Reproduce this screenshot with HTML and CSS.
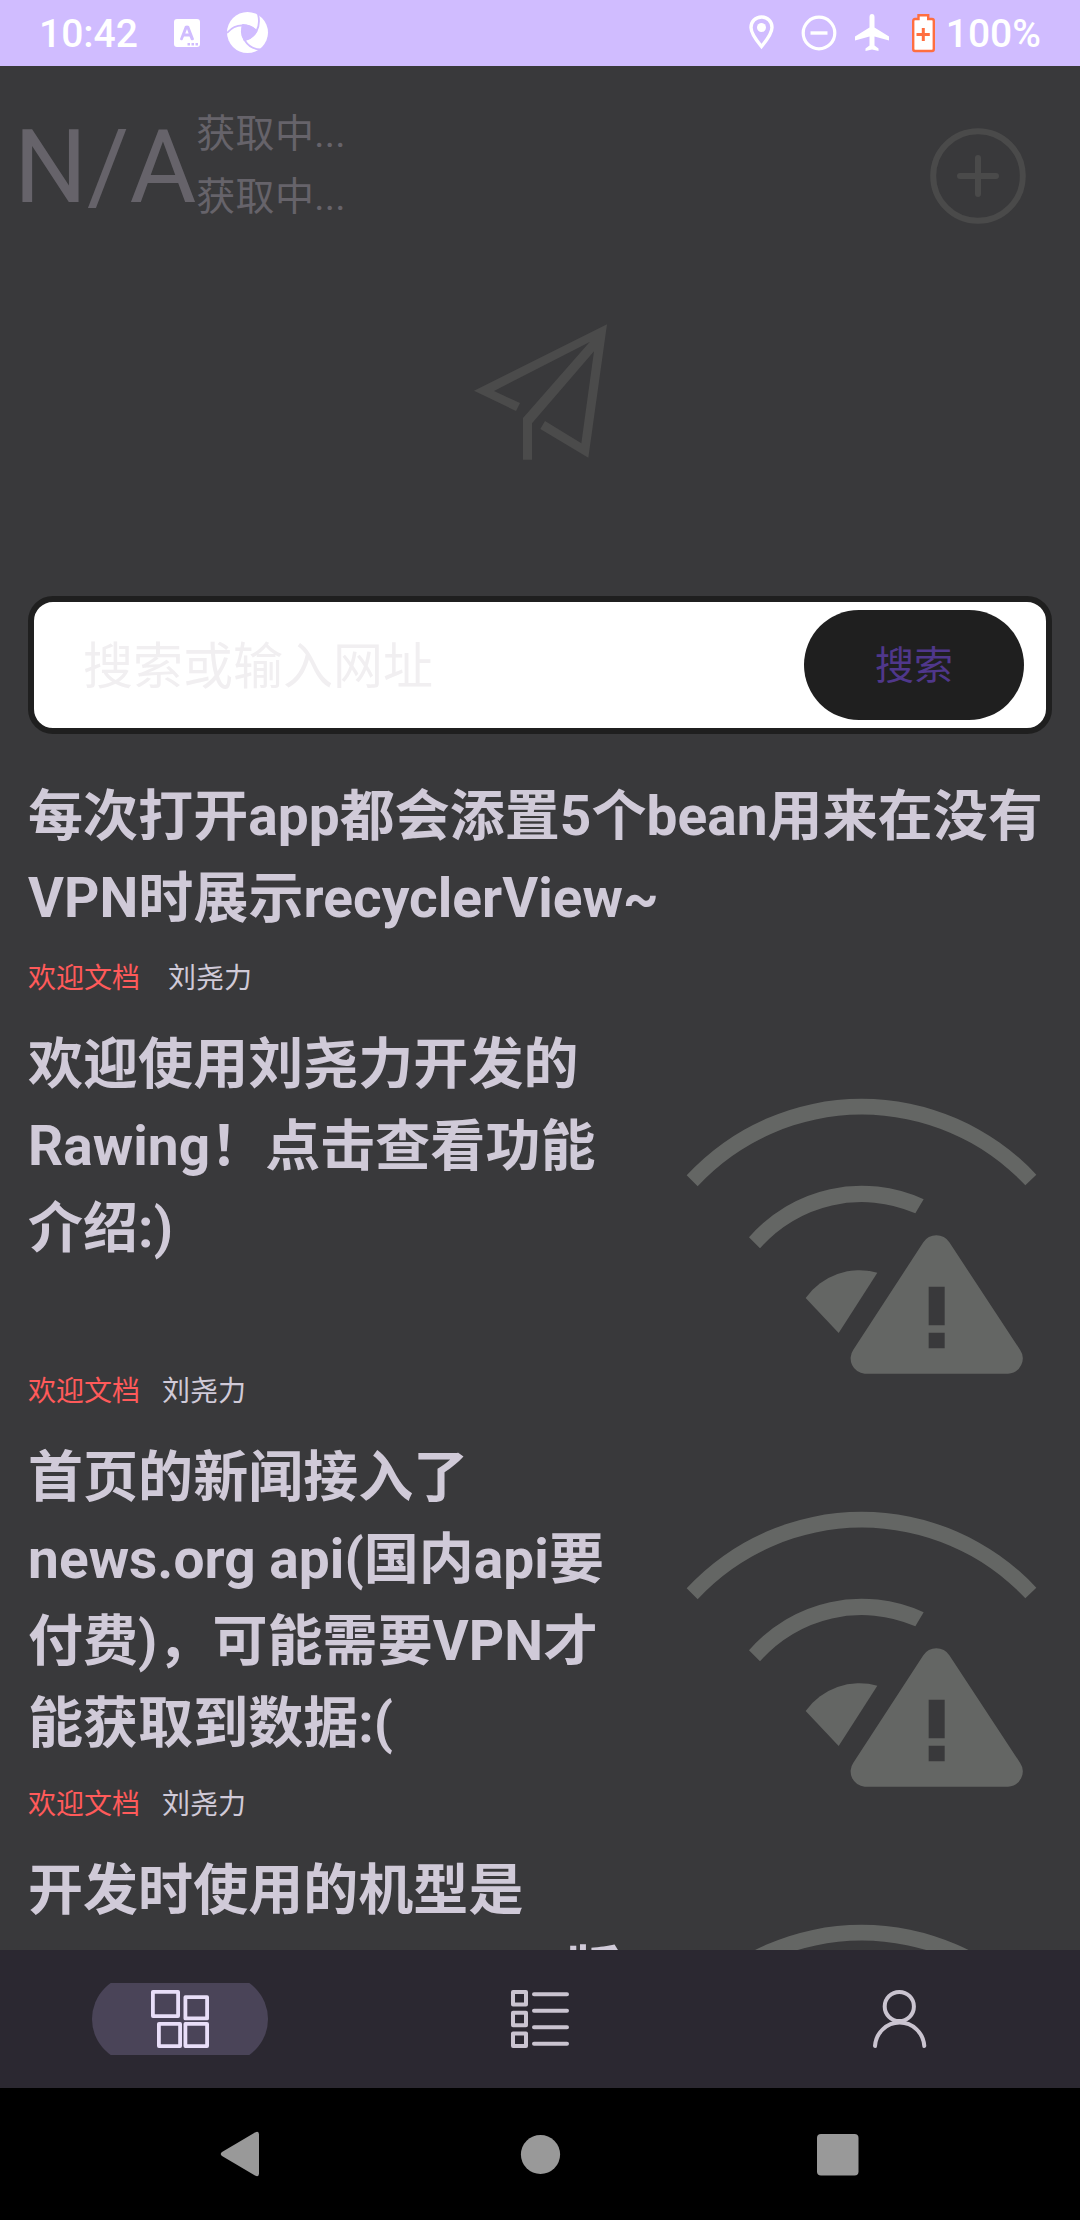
FILE: index.html
```html
<!DOCTYPE html>
<html lang="zh-CN">
<head>
<meta charset="utf-8">
<title>Rawing</title>
<link rel="stylesheet" href="styles.css">
</head>
<body>
<svg class="defs" aria-hidden="true">
  <symbol id="wifi-alert" viewBox="0 0 1200 990">
    <path d="M80 316A716 716 0 0 1 1129 314L1096 346A672 672 0 0 0 113 349Z"/>
    <path d="M267 502A446 446 0 0 1 791 388L766 430A404 404 0 0 0 300 535Z"/>
    <path d="M437 684A199 199 0 0 1 652 608L536 789Z"/>
    <path fill-rule="evenodd" d="M790 517A46 46 0 0 1 868 517L1080 839A46 46 0 0 1 1044 911H614A46 46 0 0 1 580 839ZM806 650V766H854V650ZM806 788V835H854V788Z"/>
  </symbol>
</svg>
<div class="screen">
  <header class="status">
    <span class="clock">10:42</span>
    <svg class="badge-icon" width="26" height="29" viewBox="0 0 26 29"><path fill="#fff" fill-rule="evenodd" d="M3 0H23Q26 0 26 3V25Q26 28 23 28H3Q0 28 0 25V3Q0 0 3 0ZM11 7L6 20Q6.500 22 8.500 21L10 17.500H15.500L17 21Q19.500 22 20 20L15 7Q13 6 11 7ZM11.200 14.600L13 10L14.700 14.600ZM13.500 24V26.500H16V24ZM17.500 24V26.500H20V24ZM21.500 24V26.500H24V24Z"/></svg>
    <svg class="swirl" width="42" height="42" viewBox="0 0 42 42"><circle cx="20.500" cy="20.500" r="20.500" fill="#fff"/><g fill="none" stroke="#d0bcff" stroke-width="1.800"><path fill="#d0bcff" d="M16 13Q24 13.500 29.500 19Q25 27 17.500 28Q14 21 16 13Z"/><path d="M0 21Q7 13 16 13.500Q24 13.500 29.500 19Q33.500 12 31 2M29.500 19Q27 25 17.500 28Q23 37 33 37.500M17.500 28Q13 22 16 13"/></g></svg>
    <span class="grow"></span>
    <svg class="pin" width="26" height="36" viewBox="0 0 26 36"><path fill="none" stroke="#fff" stroke-width="3.400" d="M12.500 2C6.500 2 2 6.500 2 12.500C2 19 8 26 12.500 31.500C17 26 23 19 23 12.500C23 6.500 18.500 2 12.500 2Z"/><circle cx="12.500" cy="12.500" r="4.500" fill="#fff"/></svg>
    <svg class="dnd" width="36" height="36" viewBox="0 0 36 36"><circle cx="18" cy="18" r="15.800" fill="none" stroke="#fff" stroke-width="3.200"/><path fill="#fff" d="M9.500 16.300H26.500V19.700H9.500Z"/></svg>
    <svg class="flight" width="36" height="38" viewBox="0 0 36 38"><path fill="#fff" d="M18 0Q20.500 0 20.500 3V13.500L35 22.500V26.500L20.500 22.500V31.500L24.500 34.500V37L18 35.500L11.500 37V34.500L15.500 31.500V22.500L1 26.500V22.500L15.500 13.500V3Q15.500 0 18 0Z"/></svg>
    <svg class="battery" width="24" height="39" viewBox="0 0 24 39"><path fill="#fff" stroke="#ff6e40" stroke-width="2.400" d="M6.500 1.300H16.200V5H20Q21.800 5 21.800 7V35Q21.800 37 20 37H3Q1.200 37 1.200 35V7Q1.200 5 3 5H6.500Z"/><path fill="#ff6e40" d="M9.800 14H12.800V19H17.800V22H12.800V27H9.800V22H4.500V19H9.800Z"/></svg>
    <span class="percent">100%</span>
  </header>

  <main class="content">
    <section class="weather">
      <span class="temp">N/A</span>
      <div class="place"><span>获取中...</span><span>获取中...</span></div>
      <svg class="add" width="96" height="96" viewBox="0 0 96 96" fill="none" stroke="#4a4a4a" stroke-width="6" stroke-linecap="round"><circle cx="48" cy="48" r="44.800"/><path d="M48 30V66M30 48H66"/></svg>
    </section>
    <svg class="plane" width="200" height="180" viewBox="0 0 600 540" fill="#4b4b4b"><path d="M501 73L445 473L301 387L315 363L424 430L462 154L276 370V479H249V354L449 126L162 273L240 309L228 333L102 272Z"/></svg>
    <form class="search">
      <span class="hint">搜索或输入网址</span>
      <span class="go">搜索</span>
    </form>

    <article class="lead">
      <h2>每次打开app都会添置5个bean用来在没有VPN时展示recyclerView~</h2>
      <p class="meta"><span>欢迎文档</span><span>刘尧力</span></p>
    </article>
    <article class="item">
      <div class="text">
        <h2>欢迎使用刘尧力开发的<br>Rawing！点击查看功能<br>介绍:)</h2>
        <p class="meta"><span>欢迎文档</span><span>刘尧力</span></p>
      </div>
      <svg class="thumb"><use href="#wifi-alert"/></svg>
    </article>
    <article class="item">
      <div class="text">
        <h2>首页的新闻接入了<br>news.org api(国内api要<br>付费)，可能需要VPN才<br>能获取到数据:(</h2>
        <p class="meta"><span>欢迎文档</span><span>刘尧力</span></p>
      </div>
      <svg class="thumb"><use href="#wifi-alert"/></svg>
    </article>
    <article class="item">
      <div class="text">
        <h2>开发时使用的机型是<br>Redmi Note notebook版</h2>
      </div>
      <svg class="thumb"><use href="#wifi-alert"/></svg>
    </article>
  </main>

  <nav class="tabs">
    <div class="tab"><span class="pill"><svg width="60" height="60" viewBox="0 0 60 60" fill="none" stroke="#e8def8" stroke-width="3.800" stroke-linejoin="round"><path d="M2.900 2.900H28.100V27.100H2.900ZM35.400 8.200H57.100V29.400H35.400ZM8.900 34.900H30.100V57.100H8.900ZM35.400 34.900H57.100V57.100H35.400Z"/></svg></span></div>
    <div class="tab"><svg width="60" height="60" viewBox="0 0 60 60" fill="none" stroke="#cac4d0" stroke-width="4" stroke-linejoin="round" stroke-linecap="round"><path d="M3 3H16V15.500H3ZM3 23.700H16V36.200H3ZM3 44.500H16V57H3ZM24 5.300H57M24 21.700H57M24 38.300H57M24 54.700H57"/></svg></div>
    <div class="tab"><svg width="60" height="60" viewBox="0 0 60 60" fill="none" stroke="#cac4d0" stroke-width="4" stroke-linecap="round"><circle cx="29.300" cy="17.500" r="14.600"/><path d="M5 57A24.700 25 0 0 1 54.300 57"/></svg></div>
  </nav>

  <footer class="sysnav">
    <svg width="300" height="60" viewBox="0 0 300 60" fill="#999"><path d="M165 8.500Q169 6.500 169 10.500V49.500Q169 53.500 165 51.500L132 32Q129.500 30 132 28Z"/></svg>
    <svg width="300" height="60" viewBox="0 0 300 60" fill="#999"><circle cx="150.500" cy="30.500" r="19.600"/></svg>
    <svg width="300" height="60" viewBox="0 0 300 60" fill="#999"><rect x="127" y="10" width="41.500" height="41.500" rx="4"/></svg>
  </footer>
</div>
</body>
</html>
```
FILE: styles.css
```css
* { box-sizing: border-box; }
body { margin: 0; font-family: Roboto, "Noto Sans CJK SC", sans-serif; }
h2, p { margin: 0; }
svg { display: block; flex: none; }
.defs { width: 0; height: 0; position: absolute; }

.screen {
  width: 1080px;
  height: 2220px;
  display: flex;
  flex-direction: column;
  overflow: hidden;
  background: #39393b;
}

.status {
  height: 66px;
  flex: none;
  display: flex;
  align-items: center;
  padding: 0 39px;
  background: #d0bcff;
  color: #fff;
  font-size: 39px;
  font-weight: 500;
}
.clock { width: 135px; line-height: 66px; padding-top: 2px; }
.percent { line-height: 66px; padding-top: 2px; }
.swirl { margin-left: 27px; }
.grow { flex: 1; }
.dnd { margin-left: 26px; }
.flight { margin-left: 17px; }
.battery { margin: 0 10px 0 22px; }

.content { flex: 1; min-height: 0; overflow: hidden; }

.weather {
  height: 234px;
  display: flex;
  align-items: flex-start;
  color: #66636a;
  padding: 37px 54px 0 14px;
}
.temp { font-size: 102.500px; line-height: 126px; margin-top: 1px; }
.place {
  flex: 1;
  display: flex;
  flex-direction: column;
  font-size: 39px;
  letter-spacing: 0.3px;
  line-height: 63px;
}
.add { margin-top: 25px; }
.plane { margin: 0 auto; }

.search {
  height: 138px;
  margin: 116px 28px 0;
  padding: 0 22px 0 49px;
  display: flex;
  align-items: center;
  justify-content: space-between;
  border: 6px solid #1f1f1f;
  border-radius: 25px;
  background: #fff;
}
.hint { font-size: 50px; line-height: 72px; padding-top: 3px; color: #f1eff1; }
.go {
  width: 220px;
  height: 110px;
  border-radius: 55px;
  background: #1f1f1f;
  color: #4f378b;
  font-size: 39px;
  line-height: 112px;
  text-align: center;
}

h2 { font-size: 55px; line-height: 82px; font-weight: 700; color: #d0cad8; letter-spacing: 0.05px; }
.lead { height: 283px; padding: 41px 28px 0; }
.meta { display: flex; gap: 28px; font-size: 28px; line-height: 40px; color: #d0cad8; }
.lead .meta { margin-top: 20px; }
.meta span:first-child { color: #ff5a5a; }
.item { height: 413px; display: flex; padding-left: 28px; }
.item .text { width: 632px; padding: 6px 0 18px; display: flex; flex-direction: column; justify-content: space-between; }
.item h2 { height: 328px; }
.item .meta { gap: 22px; }
.thumb { width: 400px; height: 330px; margin-top: 53px; fill: #646664; }

.tabs { height: 138px; flex: none; display: grid; grid-template-columns: repeat(3, 1fr); background: #2b2831; }
.tab { display: flex; align-items: center; justify-content: center; }
.pill {
  width: 176px;
  height: 88px;
  border-radius: 44px;
  clip-path: inset(8px 0);
  display: flex;
  align-items: center;
  justify-content: center;
  background: #4a4458;
}
.sysnav { height: 132px; flex: none; display: flex; align-items: center; justify-content: center; background: #000; }
```
